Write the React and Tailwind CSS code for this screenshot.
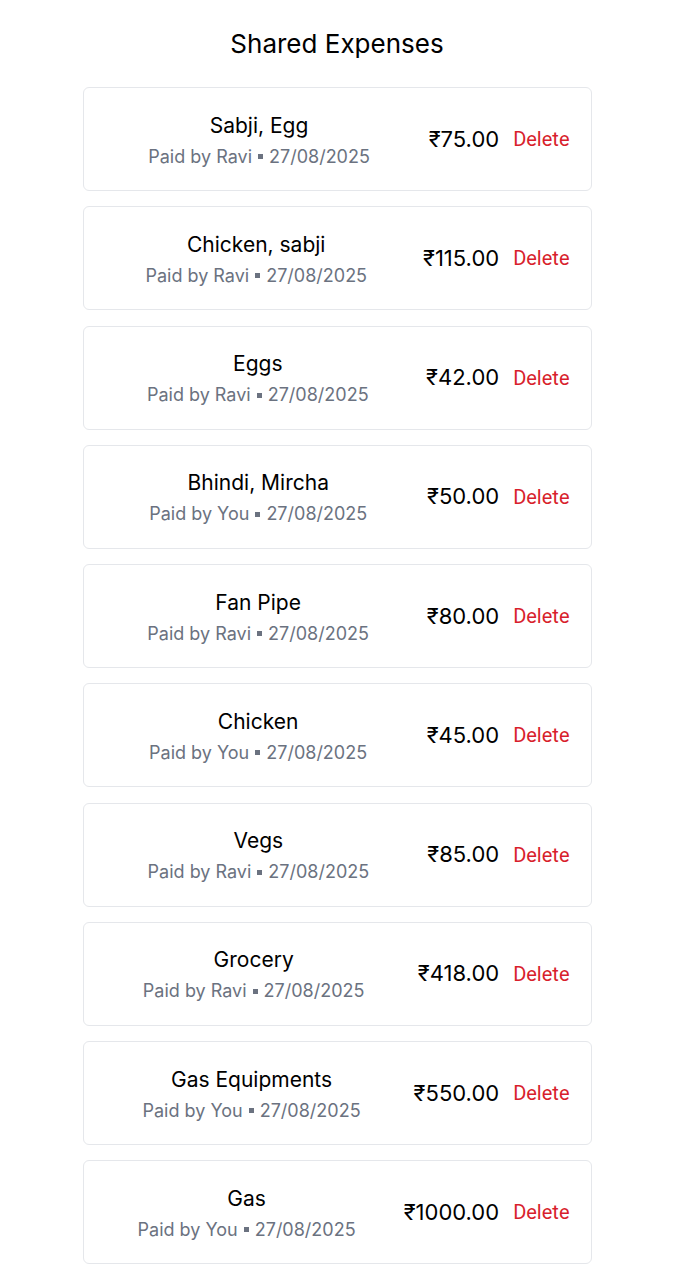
const items = [
  ["Sabji, Egg", "Ravi", "75.00"],
  ["Chicken, sabji", "Ravi", "115.00"],
  ["Eggs", "Ravi", "42.00"],
  ["Bhindi, Mircha", "You", "50.00"],
  ["Fan Pipe", "Ravi", "80.00"],
  ["Chicken", "You", "45.00"],
  ["Vegs", "Ravi", "85.00"],
  ["Grocery", "Ravi", "418.00"],
  ["Gas Equipments", "You", "550.00"],
  ["Gas", "You", "1000.00"],
];

export default function App() {
  return (
    <div className="min-h-screen bg-white pt-[28px]" style={{ fontFamily: "Inter, 'Noto Sans', sans-serif" }}>
      <h1 className="text-center text-[26px] leading-[32px] text-black mb-[27px]">Shared Expenses</h1>
      <div className="w-[509px] mx-auto flex flex-col gap-[15.25px]">
        {items.map(([name, by, amt]) => (
          <div key={name} className="h-[104px] border border-[#e5e7eb] rounded-[6px] flex items-center pl-[20px] pr-[21px]">
            <div className="flex-1 text-center pt-[3px]">
              <div className="text-[21px] leading-[28px] text-black">{name}</div>
              <div className="text-[18px] leading-[26px] mt-[4px] text-[#6b7280] flex items-center justify-center gap-[6px]">
                <span>Paid by {by}</span>
                <span className="inline-block w-[5px] h-[5px] bg-[#6b7280]"></span>
                <span>27/08/2025</span>
              </div>
            </div>
            <div className="flex items-center gap-[14px] ml-[14px]">
              <span className="text-[22px] text-black">₹{amt}</span>
              <span className="text-[20px] text-[#d81e2c]" style={{ fontFamily: "Roboto, sans-serif" }}>Delete</span>
            </div>
          </div>
        ))}
      </div>
    </div>
  );
}
